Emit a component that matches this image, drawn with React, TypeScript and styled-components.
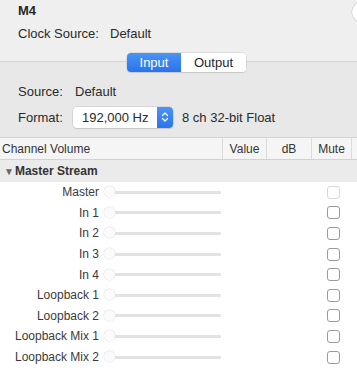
import React from 'react'
import styled, { createGlobalStyle } from 'styled-components'

const GlobalStyle = createGlobalStyle`
  html, body {
    margin: 0;
    padding: 0;
    background: #e8e8e8;
    font-family: "Liberation Sans", Arial, sans-serif;
    color: #262626;
  }
`

const Window = styled.div`
  width: 357px;
  height: 372px;
  overflow: hidden;
  background: #e8e8e8;
  display: flex;
  flex-direction: column;
  position: relative;
`

const Top = styled.div`
  height: 61px;
  background: #efefef;
  border-bottom: 1px solid #d4d4d4;
  padding: 0 18px;
  display: flex;
  flex-direction: column;
  position: relative;
`

const Title = styled.div`
  font-size: 13px;
  font-weight: bold;
  height: 22px;
  line-height: 22px;
`

const InfoRow = styled.div<{ $h?: number }>`
  display: flex;
  align-items: center;
  height: ${p => p.$h ?? 22}px;
  font-size: 13px;
  color: #2a2a2a;
`

const Key = styled.span`
  width: 92px;
`

const SourceKey = styled.span`
  width: 57px;
`

const HelpButton = styled.div`
  position: absolute;
  right: -15px;
  top: 2px;
  width: 20px;
  height: 20px;
  border-radius: 50%;
  background: #fff;
  box-shadow: 0 0 0 0.5px #c4c4c4;
`

const SegmentRow = styled.div`
  display: flex;
  justify-content: center;
  margin-top: -9px;
  margin-left: 16px;
  position: relative;
`

const Segmented = styled.div`
  display: flex;
  height: 19px;
  border-radius: 4px;
  background: #fff;
  box-shadow: 0 0 0 0.5px #c8c8c8, 0 1px 1px rgba(0, 0, 0, 0.12);
  overflow: hidden;
`

const Segment = styled.div<{ $on?: boolean }>`
  width: ${p => (p.$on ? 54 : 65)}px;
  display: flex;
  align-items: center;
  justify-content: center;
  font-size: 13px;
  color: ${p => (p.$on ? '#fff' : '#262626')};
  background: ${p => (p.$on ? 'linear-gradient(#4a93f7, #2a74ea)' : '#fff')};
`

const Lower = styled.div`
  padding: 7px 18px 0;
  display: flex;
  flex-direction: column;
`

const Popup = styled.div`
  display: flex;
  align-items: center;
  width: 100px;
  height: 21px;
  border-radius: 4px;
  background: #fff;
  box-shadow: 0 0 0 0.5px #c4c4c4, 0 1px 1px rgba(0, 0, 0, 0.14);
  overflow: hidden;
  margin-right: 9px;
  margin-left: -2px;
`

const PopupText = styled.span`
  flex: 1;
  padding-left: 9px;
  font-size: 13px;
`

const Stepper = styled.div`
  width: 16px;
  height: 100%;
  background: linear-gradient(#4a93f7, #2a74ea);
  display: flex;
  align-items: center;
  justify-content: center;
`

const Table = styled.div`
  margin-top: 6px;
  display: flex;
  flex-direction: column;
  flex: 1;
  background: #fff;
`

const HeaderRow = styled.div`
  display: grid;
  grid-template-columns: 223px 44px 45px 40px 5px;
  height: 21px;
  background: #f5f5f5;
  border-top: 1px solid #d2d2d2;
  border-bottom: 1px solid #d2d2d2;
  font-size: 12px;
  color: #333;
`

const HeaderCell = styled.div<{ $left?: boolean }>`
  display: flex;
  align-items: center;
  justify-content: ${p => (p.$left ? 'flex-start' : 'center')};
  padding-left: ${p => (p.$left ? 2 : 0)}px;
  border-right: 1px solid #dcdcdc;
`

const GroupRow = styled.div`
  height: 22px;
  background: #ebebeb;
  display: flex;
  align-items: center;
  padding-left: 4px;
  font-size: 12px;
  font-weight: bold;
  color: #333;
`

const Triangle = styled.span`
  font-size: 10px;
  color: #666;
  margin-right: 1px;
`

const ChannelRow = styled.div`
  height: 20.6px;
  display: flex;
  align-items: center;
`

const ChannelLabel = styled.span`
  width: 99px;
  text-align: right;
  font-size: 12px;
  color: #3a3a3a;
`

const Slider = styled.div`
  margin-left: 5px;
  width: 117px;
  height: 12px;
  display: flex;
  align-items: center;
  position: relative;
`

const Track = styled.div`
  flex: 1;
  height: 3px;
  border-radius: 2px;
  background: #e2e2e2;
  margin-left: 6px;
`

const Knob = styled.div`
  position: absolute;
  left: 0;
  top: 0;
  width: 11px;
  height: 11px;
  border-radius: 50%;
  background: #fbfbfb;
  box-shadow: 0 0 0 0.5px #e0e0e0;
`

const Check = styled.div<{ $disabled?: boolean }>`
  margin-left: 106px;
  width: 11px;
  height: 11px;
  border-radius: 3px;
  background: #fff;
  border: 1px solid ${p => (p.$disabled ? '#d8d8d8' : '#9a9a9a')};
`

const channels = ['Master', 'In 1', 'In 2', 'In 3', 'In 4', 'Loopback 1', 'Loopback 2', 'Loopback Mix 1', 'Loopback Mix 2']

export default function App() {
  return (
    <Window>
      <GlobalStyle />
      <Top>
        <Title>M4</Title>
        <InfoRow>
          <Key>Clock Source:</Key>
          <span>Default</span>
        </InfoRow>
        <HelpButton />
      </Top>
      <SegmentRow>
        <Segmented>
          <Segment $on>Input</Segment>
          <Segment>Output</Segment>
        </Segmented>
      </SegmentRow>
      <Lower>
        <InfoRow $h={24}>
          <SourceKey>Source:</SourceKey>
          <span>Default</span>
        </InfoRow>
        <InfoRow $h={28}>
          <SourceKey>Format:</SourceKey>
          <Popup>
            <PopupText>192,000 Hz</PopupText>
            <Stepper>
              <svg width="8" height="12" viewBox="0 0 8 12">
                <path d="M1.5 4.5 L4 2 L6.5 4.5 M1.5 7.5 L4 10 L6.5 7.5" fill="none" stroke="#fff" strokeWidth="1.3" strokeLinecap="round" strokeLinejoin="round" />
              </svg>
            </Stepper>
          </Popup>
          <span>8 ch 32-bit Float</span>
        </InfoRow>
      </Lower>
      <Table>
        <HeaderRow>
          <HeaderCell $left>Channel Volume</HeaderCell>
          <HeaderCell>Value</HeaderCell>
          <HeaderCell>dB</HeaderCell>
          <HeaderCell>Mute</HeaderCell>
          <div />
        </HeaderRow>
        <GroupRow>
          <Triangle>▼</Triangle>Master Stream
        </GroupRow>
        {channels.map((c, i) => (
          <ChannelRow key={c}>
            <ChannelLabel>{c}</ChannelLabel>
            <Slider>
              <Track />
              <Knob />
            </Slider>
            <Check $disabled={i === 0} />
          </ChannelRow>
        ))}
      </Table>
    </Window>
  )
}
